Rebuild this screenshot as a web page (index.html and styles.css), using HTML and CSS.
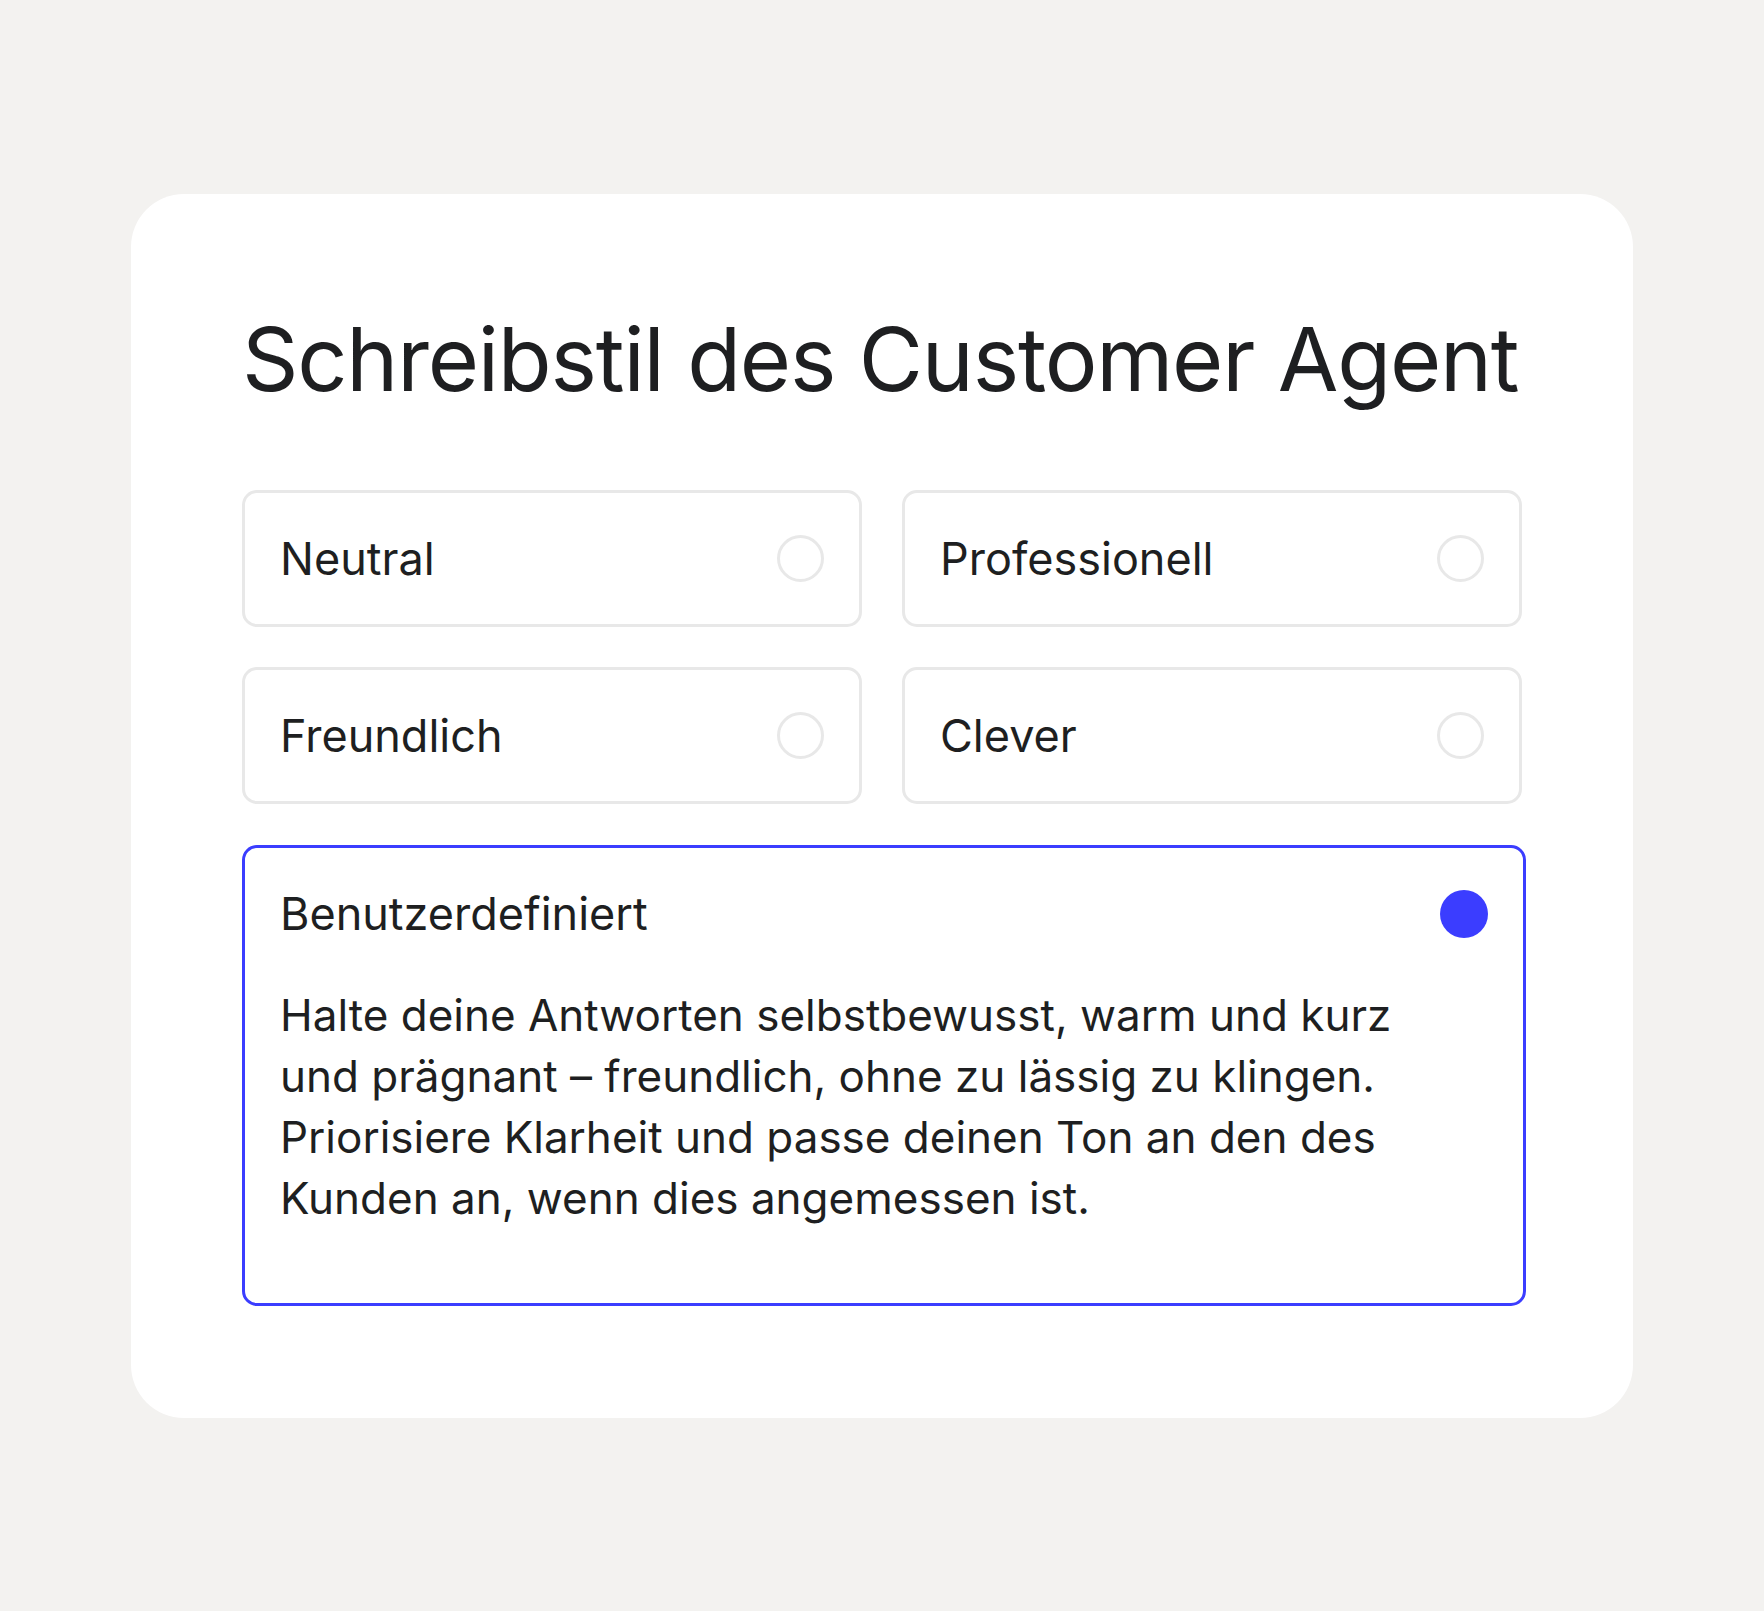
FILE: index.html
```html
<!DOCTYPE html>
<html lang="de">
<head>
    <meta charset="UTF-8">
    <meta name="viewport" content="width=device-width, initial-scale=1.0">
    <title>Schreibstil des Customer Agent</title>
    <link rel="stylesheet" href="styles.css">
</head>
<body>
    <div class="card">
        <h1 class="title">Schreibstil des Customer Agent</h1>

        <div class="options">
            <div class="option">
                <span class="option-label">Neutral</span>
                <span class="radio"></span>
            </div>
            <div class="option">
                <span class="option-label">Professionell</span>
                <span class="radio"></span>
            </div>
            <div class="option">
                <span class="option-label">Freundlich</span>
                <span class="radio"></span>
            </div>
            <div class="option">
                <span class="option-label">Clever</span>
                <span class="radio"></span>
            </div>
        </div>

        <div class="custom">
            <div class="custom-head">
                <span class="option-label">Benutzerdefiniert</span>
                <span class="radio checked"></span>
            </div>
            <p class="custom-text">Halte deine Antworten selbstbewusst, warm und kurz und prägnant – freundlich, ohne zu lässig zu klingen. Priorisiere Klarheit und passe deinen Ton an den des Kunden an, wenn dies angemessen ist.</p>
        </div>
    </div>
</body>
</html>
```

FILE: styles.css
```css
* {
    margin: 0;
    padding: 0;
    box-sizing: border-box;
}

body {
    font-family: Inter, 'Noto Sans', sans-serif;
    background: #f3f2f0;
    color: #1e1f21;
    min-height: 100vh;
    display: flex;
    align-items: center;
    justify-content: center;
}

.card {
    background: #ffffff;
    border-radius: 53px;
    width: 1502px;
    height: 1224px;
    padding: 113px 111px 0 111px;
}

.title {
    font-size: 88px;
    font-weight: 400;
    line-height: 1.2;
    letter-spacing: -1.2px;
    white-space: nowrap;
    margin-bottom: 78px;
}

.options {
    display: grid;
    grid-template-columns: 620px 620px;
    gap: 40px;
}

.option {
    height: 137px;
    border: 3px solid #e8e8e8;
    border-radius: 15px;
    padding: 0 35px 0 35px;
    display: flex;
    align-items: center;
    justify-content: space-between;
}

.option-label {
    font-size: 45px;
    line-height: 1.2;
}

.radio {
    width: 47px;
    height: 47px;
    border: 3px solid #e8e8e8;
    border-radius: 50%;
}

.radio.checked {
    width: 48px;
    height: 48px;
    border: none;
    background: #3b3dff;
}

.custom {
    margin-top: 41px;
    width: 1284px;
    border: 3px solid #3b3dff;
    border-radius: 15px;
    padding: 39px 35px 74px 35px;
}

.custom-head {
    display: flex;
    align-items: center;
    justify-content: space-between;
    height: 54px;
    margin-bottom: 44px;
}

.custom-text {
    font-size: 44px;
    line-height: 61px;
    max-width: 1150px;
}
```
